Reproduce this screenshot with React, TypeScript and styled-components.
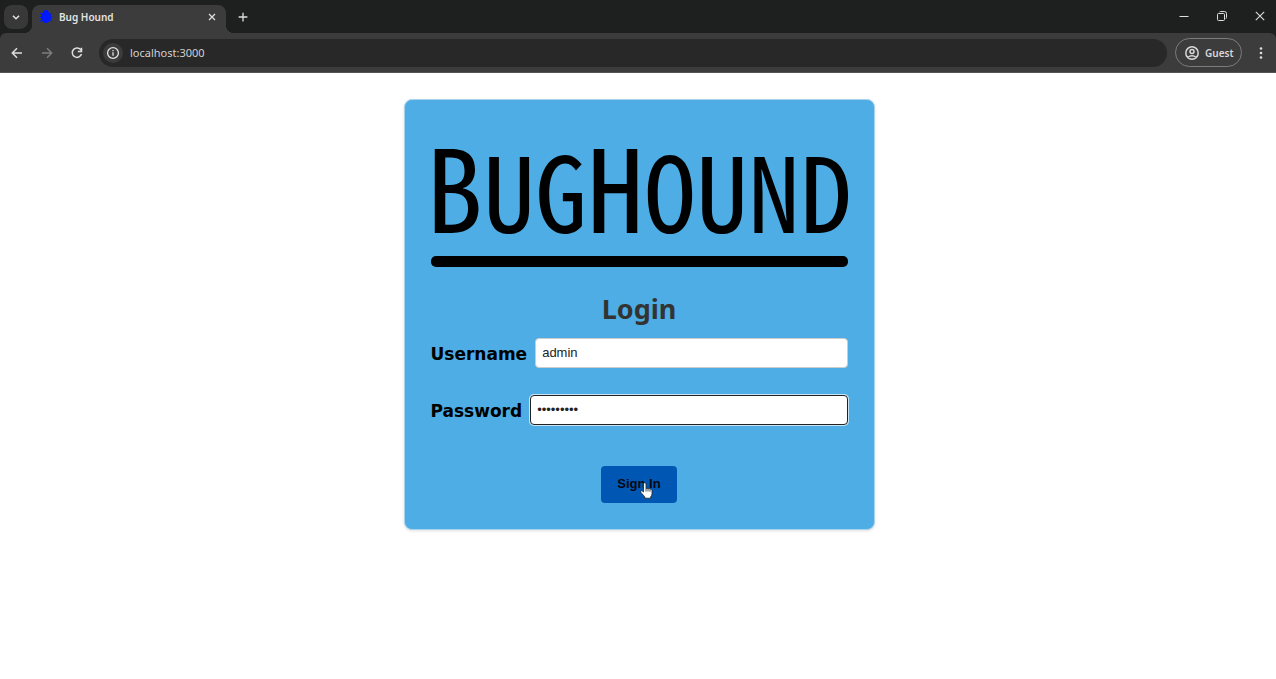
import React, { useState } from "react";
import styled, { createGlobalStyle } from "styled-components";

const GlobalStyle = createGlobalStyle`
  *, *::before, *::after { box-sizing: border-box; }
  body { margin: 0; background: #fff; font-family: "Liberation Sans", Arial, sans-serif; }
`;

const TabStrip = styled.header`
  display: flex;
  align-items: flex-end;
  height: 33px;
  padding-left: 4px;
  background: #1e201f;
`;

const TabSearch = styled.button`
  display: grid;
  place-items: center;
  width: 24px;
  height: 24px;
  margin: 0 4px 4px 0;
  padding: 0;
  border: 0;
  border-radius: 8px;
  background: #383838;
  color: #e3e3e3;
`;

const Tab = styled.div`
  position: relative;
  display: flex;
  align-items: center;
  gap: 6px;
  width: 194px;
  height: 28px;
  padding: 0 8px 4px 7px;
  border-radius: 8px 8px 0 0;
  background: #3c3c3c;
  color: #e3e3e3;
  font: 600 10px/14px "Noto Sans", sans-serif;

  &::before, &::after {
    content: "";
    position: absolute;
    bottom: 0;
    width: 8px;
    height: 8px;
  }
  &::before {
    left: -8px;
    background: radial-gradient(circle at 0 0, transparent 8px, #3c3c3c 8px);
  }
  &::after {
    right: -8px;
    background: radial-gradient(circle at 100% 0, transparent 8px, #3c3c3c 8px);
  }
`;

const TabTitle = styled.span`
  flex: 1;
`;

const BareButton = styled.button<{ $dim?: boolean; $width?: number }>`
  display: grid;
  place-items: center;
  width: ${(p) => p.$width ?? 30}px;
  height: 28px;
  padding: 0;
  border: 0;
  background: none;
  color: ${(p) => (p.$dim ? "#7c7c7c" : "#dedede")};
`;

const NewTab = styled(BareButton)`
  margin: 0 0 2px 2px;
`;

const MenuButton = styled(BareButton)`
  padding-left: 4px;
`;

const WindowControls = styled.div`
  display: flex;
  margin: 0 -3px 3px auto;
`;

const Toolbar = styled.div`
  display: flex;
  align-items: center;
  height: 40px;
  padding: 0 0 0 2px;
  border-bottom: 1px solid #555;
  border-radius: 6px 6px 0 0;
  background: #3c3c3c;
  box-shadow: 0 -6px 0 #1e201f;
`;

const AddressBar = styled.div`
  display: flex;
  flex: 1;
  align-items: center;
  gap: 7px;
  height: 28px;
  margin: 0 8px 0 7px;
  padding-left: 4px;
  border-radius: 14px;
  background: #282828;
`;

const SiteInfo = styled.button`
  display: grid;
  place-items: center;
  width: 20px;
  height: 20px;
  padding: 0;
  border: 0;
  border-radius: 50%;
  background: #3c3c3c;
  color: #e3e3e3;
`;

const AddressInput = styled.input`
  flex: 1;
  min-width: 0;
  padding: 0;
  border: 0;
  outline: 0;
  background: none;
  color: #d0d0d0;
  font: 11px "Noto Sans", sans-serif;
`;

const Profile = styled.button`
  display: flex;
  align-items: center;
  gap: 5px;
  width: 67px;
  height: 29px;
  padding: 0 0 0 8px;
  border: 1px solid #7c7c7c;
  border-radius: 15px;
  background: none;
  color: #d8d8d8;
  font: 600 10px "Noto Sans", sans-serif;
`;

const Page = styled.main`
  display: flex;
  justify-content: center;
  padding: 26px 14px 26px 16px;
`;

const Card = styled.section`
  width: 100%;
  max-width: 471px;
  padding: 26px;
  border: 1px solid #a9d4ee;
  border-radius: 8px;
  background: #4dade4;
  box-shadow: 0 1px 3px rgba(0, 0, 0, 0.12);
`;

const Wordmark = styled.div`
  display: flex;
  justify-content: center;
  height: 130px;
  color: #000;
  font: 114px/116px "Noto Sans Mono CJK JP", "Noto Sans Mono CJK SC", "DejaVu Sans Mono", monospace;
  white-space: nowrap;
`;

const SmallCaps = styled.span`
  font-size: 104px;
`;

const Rule = styled.div`
  height: 11px;
  border-radius: 5px;
  background: #000;
`;

const Title = styled.h1`
  margin: 23px 0 10px;
  color: #333;
  font: 700 27px/38px "Noto Sans", sans-serif;
  text-align: center;
`;

const Field = styled.div`
  display: flex;
  align-items: center;
  gap: 8px;
  margin-bottom: 27px;
`;

const Label = styled.label`
  padding-top: 2px;
  color: #000;
  font: 700 17px/20px "DejaVu Sans", Verdana, sans-serif;
`;

const TextInput = styled.input<{ $active?: boolean }>`
  flex: 1;
  min-width: 0;
  height: 30px;
  padding: 0 6px 2px;
  border: 1px solid ${(p) => (p.$active ? "#222" : "#ccc")};
  border-radius: 4px;
  outline: 0;
  box-shadow: ${(p) => (p.$active ? "0 0 0 1px #c9e4f5" : "none")};
  background: #fff;
  color: #222;
  font: 13px "Liberation Sans", Arial, sans-serif;
`;

const SubmitRow = styled.div`
  display: flex;
  justify-content: center;
  padding-top: 14px;
`;

const SignIn = styled.button`
  position: relative;
  min-width: 76px;
  height: 37px;
  padding: 0 16px 2px;
  border: 0;
  border-radius: 4px;
  background: #0056b3;
  color: #05080f;
  font: 700 13px "Liberation Sans", Arial, sans-serif;
`;

const Pointer = styled.svg`
  position: absolute;
  top: 16px;
  left: 39px;
`;

const Icon = ({ d, size = 16, width = 1.5 }: { d: string; size?: number; width?: number }) => (
  <svg width={size} height={size} viewBox="0 0 16 16" fill="none" stroke="currentColor" strokeWidth={width} aria-hidden="true">
    <path d={d} />
  </svg>
);

const BugIcon = () => (
  <svg width="14" height="14" viewBox="0 0 14 14" fill="#0019ff" stroke="#0019ff" aria-hidden="true">
    <path d="M4.500 2.500a2.500 2 0 0 1 5 0l1.800 2v5q-1.500 3-4.300 3t-4.300-3v-5z" />
    <path d="M3 4.500 1 3M3 7.500H.500M3 10 1 11.500M11 4.500 13 3M11 7.500h2.500M11 10l2 1.500" />
  </svg>
);

export default function App() {
  const [username, setUsername] = useState("admin");
  const [password, setPassword] = useState("admin1234");
  const [address, setAddress] = useState("localhost:3000");

  return (
    <>
      <GlobalStyle />
      <TabStrip>
        <TabSearch aria-label="Search tabs"><Icon size={14} width={1.7} d="m4.500 6.500 3.500 3.500 3.500-3.500" /></TabSearch>
        <Tab>
          <BugIcon />
          <TabTitle>Bug Hound</TabTitle>
          <BareButton $width={12} aria-label="Close tab"><Icon size={12} width={1.7} d="m4 4 8 8m0-8-8 8" /></BareButton>
        </Tab>
        <NewTab aria-label="New tab"><Icon size={14} d="M8 3v10M3 8h10" /></NewTab>
        <WindowControls>
          <BareButton $width={38} aria-label="Minimize"><Icon width={1} d="M3.500 8.500h9" /></BareButton>
          <BareButton $width={38} aria-label="Restore"><Icon width={1} d="M4.500 5.500h5q1 0 1 1v5q0 1-1 1h-5q-1 0-1-1v-5q0-1 1-1zM5.500 4q.3-.5 1-.5h4q2 0 2 2v4q0 .7-.8 1.300" /></BareButton>
          <BareButton $width={38} aria-label="Close"><Icon width={1.1} d="m3.800 3.800 8.400 8.400m0-8.400-8.400 8.400" /></BareButton>
        </WindowControls>
      </TabStrip>
      <Toolbar>
        <BareButton aria-label="Back"><Icon d="M13 8H3.500M8 3.300 3.300 8 8 12.700" /></BareButton>
        <BareButton $dim aria-label="Forward"><Icon d="M3 8h9.500M8 3.300 12.700 8 8 12.700" /></BareButton>
        <BareButton aria-label="Reload"><Icon d="M12 5.200A4.700 4.700 0 1 0 12.500 9M12.500 2.800v3.700H8.800" /></BareButton>
        <AddressBar>
          <SiteInfo aria-label="Site information"><Icon size={14} d="M8 1.800a6.200 6.200 0 1 0 0 12.400A6.200 6.200 0 0 0 8 1.800zM8 7.200v4M8 4.600v1.500" /></SiteInfo>
          <AddressInput aria-label="Address" value={address} onChange={(e) => setAddress(e.target.value)} />
        </AddressBar>
        <Profile>
          <Icon d="M8 1.800a6.200 6.200 0 1 0 0 12.400A6.200 6.200 0 0 0 8 1.800zM8 4.500a2 2 0 1 0 0 4 2 2 0 0 0 0-4zM3.700 12.300q4.300-3 8.600 0" />
          Guest
        </Profile>
        <MenuButton $width={34} aria-label="Menu">
          <svg width="4" height="14" viewBox="0 0 4 14" fill="currentColor" aria-hidden="true">
            <circle cx="2" cy="2.500" r="1.300" /><circle cx="2" cy="7" r="1.300" /><circle cx="2" cy="11.500" r="1.300" />
          </svg>
        </MenuButton>
      </Toolbar>
      <Page>
        <Card>
          <Wordmark><span>B<SmallCaps>UG</SmallCaps>H<SmallCaps>OUND</SmallCaps></span></Wordmark>
          <Rule />
          <Title>Login</Title>
          <form onSubmit={(e) => e.preventDefault()}>
            <Field>
              <Label htmlFor="username">Username</Label>
              <TextInput id="username" value={username} onChange={(e) => setUsername(e.target.value)} />
            </Field>
            <Field>
              <Label htmlFor="password">Password</Label>
              <TextInput $active id="password" type="password" value={password} onChange={(e) => setPassword(e.target.value)} />
            </Field>
            <SubmitRow>
              <SignIn type="submit">
                Sign In
                <Pointer width="13" height="17" viewBox="0 0 13 17" fill="#fff" stroke="#222" strokeWidth="0.8" aria-hidden="true">
                  <path d="M3.500 10V2q0-1.300 1.200-1.300T6 2v4.500q1.200-.8 2 .3 1.300-.7 2 .4 1.800-.4 2 1.200v3.200q0 2-1.300 3.200v1.400H4.800v-1.300L1 10.500q-.8-1.300.3-1.700.8-.2 2.200 1.200z" />
                  <path d="M6 6.500v3M8 7v2.500M10 7.500v2.200" />
                </Pointer>
              </SignIn>
            </SubmitRow>
          </form>
        </Card>
      </Page>
    </>
  );
}
